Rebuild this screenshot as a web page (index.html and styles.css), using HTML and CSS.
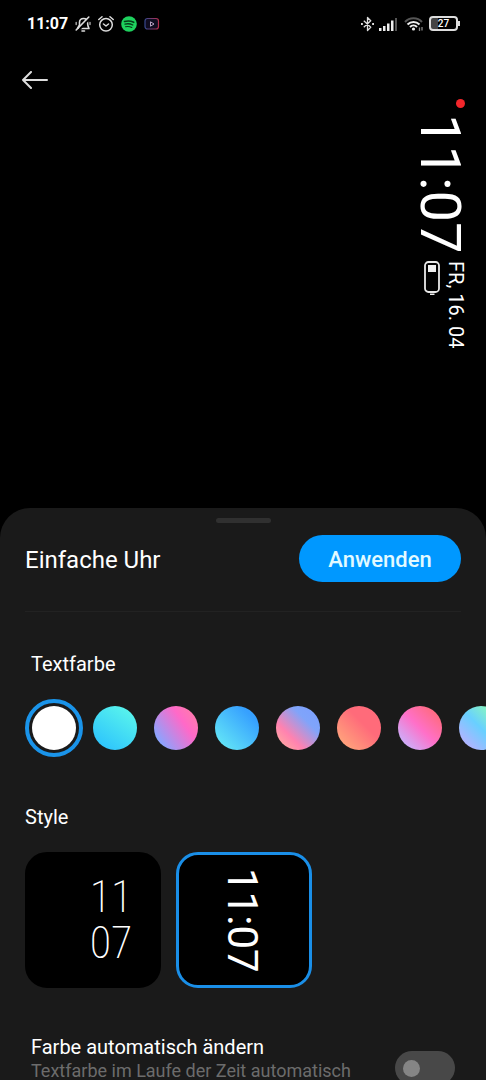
FILE: index.html
```html
<!DOCTYPE html>
<html lang="de">
<head>
<meta charset="utf-8">
<meta name="viewport" content="width=device-width, initial-scale=1">
<title>Einfache Uhr</title>
<link rel="stylesheet" href="styles.css">
</head>
<body>
<div class="screen">
  <header class="status">
    <div class="status-group">
      <time class="status-time">11:07</time>
      <svg class="icon" viewBox="0 0 16 16" fill="none" stroke="#ddd" stroke-width="1.6" stroke-linecap="round" stroke-linejoin="round">
        <path d="M4.500 9V6.500C4.500 4 6 2.500 8.500 2.500S12.500 4 12.500 6.500C12.500 9 13 10.500 14 12.500H2.500L4.500 9M7 15h2.500"/>
        <path d="M15 6.500v2M1.200 6.500v2" stroke="#999"/>
        <path d="M14.500 2.500 2.500 15.500" stroke="#000" stroke-width="2"/>
        <path d="M13.800 1 1.200 14"/>
      </svg>
      <svg class="icon" viewBox="0 0 16 16" fill="none" stroke="#ddd" stroke-width="1.500" stroke-linecap="round" stroke-linejoin="round">
        <circle cx="8" cy="8.800" r="6.300"/><path d="m5.500 8 2.500 2 2.500-2M.8 3.500 4 .8M15.200 3.500 12 .8"/>
      </svg>
      <svg class="icon" viewBox="0 0 16 16" fill="none" stroke="#063d18" stroke-linecap="round">
        <circle cx="8" cy="8" r="7.800" fill="#1ed15e" stroke="none"/>
        <path d="M3.500 5.500c3-.9 6.500-.6 9.200.8" stroke-width="1.600"/><path d="M4 8.200c2.700-.8 5.500-.4 7.800.8" stroke-width="1.300"/><path d="M4.500 10.700c2.200-.5 4.400-.3 6.300.8" stroke-width="1.100"/>
      </svg>
      <svg class="icon" viewBox="0 0 16 16" fill="none" stroke-width="1.200">
        <defs><linearGradient id="tube"><stop stop-color="#35488f"/><stop offset="1" stop-color="#b52c4c"/></linearGradient></defs>
        <rect x="1" y="2.500" width="13.500" height="10.500" rx="2.500" fill="#100c20" stroke="url(#tube)"/>
        <path d="M6.500 5.800v4.400L10 8z" stroke="#b9a3c4" stroke-width="1"/>
      </svg>
    </div>
    <div class="status-group status-group-end">
      <svg class="bluetooth" viewBox="0 0 14 16" fill="none" stroke="#ddd" stroke-width="1.400" stroke-linejoin="round">
        <path d="m3 4.500 7.500 7L7 15V1l3.500 3.500-7.500 7"/><path d="M0 8h2M12 8h2" stroke-width="2"/>
      </svg>
      <svg class="signal" viewBox="0 0 18 14">
        <path fill="#eee" d="M0 11h2.500v3H0zM4 9h2.500v5H4zM8 6.500h2.500V14H8zM12 3.500h2.500V14H12z"/><path fill="#555" d="M16 1h2v13h-2z"/>
      </svg>
      <svg class="wifi" viewBox="0 0 20 16" fill="none" stroke-width="2">
        <path stroke="#555" d="M1 6c4.500-5 12.500-5 17 0"/><path stroke="#eee" d="M3.500 8.500c3.500-3.500 8.500-3.500 12 0M6 11c2-2 5-2 7 0"/>
        <circle cx="9.500" cy="13" r="1.600" fill="#eee"/><path stroke="#888" d="M15.500 11.500v3.500M18 11v3.500" stroke-width="1.300"/>
      </svg>
      <span class="battery">27</span>
    </div>
  </header>

  <main class="content">
    <section class="preview">
      <button class="back" type="button" aria-label="Zurück">
        <svg viewBox="0 0 26 18" fill="none" stroke="#ddd" stroke-width="2" stroke-linecap="round" stroke-linejoin="round"><path d="M25 9H1M9 1 1 9l8 8"/></svg>
      </button>
      <div class="aod">
        <span class="dot"></span>
        <time class="aod-time">11:07</time>
        <div class="aod-info">
          <span class="aod-date">FR, 16. 04</span>
          <svg class="aod-battery" viewBox="0 0 16 36"><rect x="1" y="1" width="14" height="30" rx="3.500" fill="none" stroke="#e8e8e8" stroke-width="1.800"/><path fill="#eee" d="M4 4h8v7H4zM6 32.500h4.500V34H6z"/></svg>
        </div>
      </div>
    </section>

    <section class="sheet">
      <div class="handle"></div>
      <div class="sheet-head">
        <h1 class="title">Einfache Uhr</h1>
        <button class="apply" type="button">Anwenden</button>
      </div>

      <h2 class="label label-inset" id="colour-label">Textfarbe</h2>
      <div class="swatches" role="radiogroup" aria-labelledby="colour-label">
        <input class="swatch white" type="radio" name="colour" aria-label="Weiß" checked>
        <input class="swatch aqua" type="radio" name="colour" aria-label="Türkis">
        <input class="swatch orchid" type="radio" name="colour" aria-label="Orchidee">
        <input class="swatch sky" type="radio" name="colour" aria-label="Himmelblau">
        <input class="swatch dusk" type="radio" name="colour" aria-label="Dämmerung">
        <input class="swatch coral" type="radio" name="colour" aria-label="Koralle">
        <input class="swatch pink" type="radio" name="colour" aria-label="Rosa">
        <input class="swatch mint" type="radio" name="colour" aria-label="Minze">
      </div>

      <h2 class="label label-style" id="style-label">Style</h2>
      <div class="styles" role="radiogroup" aria-labelledby="style-label">
        <label class="card card-stacked"><input class="card-input" type="radio" name="style"><span>11</span><span>07</span></label>
        <label class="card card-vertical"><input class="card-input" type="radio" name="style" checked><span class="card-time">11:07</span></label>
      </div>

      <div class="setting">
        <label class="setting-text" for="auto-colour">
          <span class="setting-name">Farbe automatisch ändern</span>
          <span class="setting-hint">Textfarbe im Laufe der Zeit automatisch</span>
        </label>
        <input class="switch" type="checkbox" id="auto-colour">
      </div>
    </section>
  </main>
</div>
</body>
</html>
```

FILE: styles.css
```css
* { box-sizing: border-box; }

body {
  margin: 0;
  background: #000;
  color: #fff;
  font-family: Roboto, "Liberation Sans", sans-serif;
}

.screen {
  display: flex;
  flex-direction: column;
  height: 100vh;
  overflow: hidden;
}

.status {
  display: flex;
  flex: none;
  justify-content: space-between;
  align-items: center;
  height: 47px;
  padding: 0 27px;
}

.status-group { display: flex; align-items: center; gap: 7px; }
.status-group-end { gap: 5px; }
.status-time { font-size: 16px; font-weight: 700; line-height: 20px; }
.icon { width: 16px; height: 16px; }
.bluetooth { width: 13px; height: 16px; }
.signal { width: 18px; height: 14px; }
.wifi { width: 20px; height: 16px; margin-left: 2px; }

.battery {
  position: relative;
  display: flex;
  justify-content: center;
  align-items: center;
  width: 29px;
  height: 15px;
  margin-right: 1px;
  border: 2px solid #ddd;
  border-radius: 4px;
  background: linear-gradient(90deg, #444 27%, #000 27%);
  font-size: 10px;
  font-weight: 500;
  line-height: 11px;
}

.battery::after {
  content: "";
  position: absolute;
  top: 3px;
  right: -4px;
  width: 2px;
  height: 5px;
  background: #ddd;
}

.content { flex: 1; min-height: 0; }

.preview {
  display: flex;
  justify-content: space-between;
  align-items: flex-start;
  height: 461px;
  padding: 17px 20px 0 16px;
}

.back {
  display: flex;
  justify-content: center;
  align-items: center;
  width: 38px;
  height: 32px;
  padding: 0;
  border: 0;
  background: none;
}

.back svg { width: 26px; height: 18px; }

.aod {
  display: flex;
  flex-direction: column;
  align-items: flex-end;
  padding-top: 35px;
}

.dot {
  width: 9px;
  height: 9px;
  margin-right: 1px;
  border-radius: 50%;
  background: #f3262b;
}

.aod-time {
  margin-top: 6px;
  font-size: 56px;
  line-height: 52px;
  writing-mode: vertical-rl;
}

.aod-info {
  display: flex;
  flex-direction: row-reverse;
  align-items: flex-start;
  gap: 6px;
  margin-top: 8px;
}

.aod-date { font-size: 20px; line-height: 20px; writing-mode: vertical-rl; }
.aod-battery { width: 16px; height: 36px; }

.sheet {
  padding: 10px 25px 0;
  border-radius: 30px 30px 0 0;
  background: #1a1a1a;
}

.handle {
  width: 55px;
  height: 5px;
  margin: 0 auto;
  border-radius: 3px;
  background: #303030;
}

.sheet-head {
  display: flex;
  justify-content: space-between;
  align-items: center;
  padding: 12px 0 29px;
  border-bottom: 1px solid #222;
}

.title { margin: 0; padding-top: 2px; font-size: 24px; font-weight: 400; line-height: 32px; }

.apply {
  width: 162px;
  height: 47px;
  padding: 2px 0 0;
  border: 0;
  border-radius: 24px;
  background: #0098ff;
  color: #e2faff;
  font-family: inherit;
  font-size: 22px;
  font-weight: 500;
}

.label { margin: 0; font-size: 20px; font-weight: 400; line-height: 24px; }
.label-inset { margin-top: 40px; padding-left: 6px; }
.label-style { margin-top: 47px; }

.swatches {
  display: flex;
  gap: 17px;
  margin: 22px -25px 0 0;
  padding: 8px 0 8px 7px;
  overflow: hidden;
}

.swatch {
  flex: none;
  width: 44px;
  height: 44px;
  margin: 0;
  border-radius: 50%;
  appearance: none;
}

.swatch:checked { outline: 4px solid #1a94ea; outline-offset: 3px; }

.white { background: #fff; }
.aqua { background: linear-gradient(35deg, #27bdff, #5ffbea); }
.orchid { background: linear-gradient(55deg, #8aa4ff 15%, #ff69c8 65%, #ff82a0); }
.sky { background: linear-gradient(45deg, #6af0f5, #36a0ff 80%); }
.dusk { background: linear-gradient(45deg, #ffa9a0 8%, #ff82b0 32%, #80a4fa 68%, #7a9fff); }
.coral { background: linear-gradient(45deg, #ffb27c, #ff6b7a 60%); }
.pink { background: linear-gradient(45deg, #c8b4ff 10%, #ff70c8 50%, #ff6a78 90%); }
.mint { background: linear-gradient(45deg, #b0b4ff 15%, #68d0ff 50%, #90ffb0 90%); }

.styles { display: flex; gap: 15px; margin-top: 23px; }

.card {
  display: flex;
  width: 136px;
  height: 136px;
  border: 3px solid #000;
  border-radius: 22px;
  background: #000;
}

.card:has(:checked) { border-color: #1a8fe8; }
.card-input { position: absolute; opacity: 0; pointer-events: none; }

.card-stacked {
  flex-direction: column;
  justify-content: center;
  align-items: center;
  padding-left: 36px;
  font-family: "Roboto Condensed", Roboto, sans-serif;
  font-size: 44px;
  font-weight: 200;
  line-height: 46px;
}

.card-vertical { justify-content: center; align-items: center; padding-right: 4px; }
.card-time { font-size: 42px; line-height: 44px; writing-mode: vertical-rl; }

.setting {
  display: flex;
  justify-content: space-between;
  align-items: flex-start;
  margin-top: 45px;
  padding: 0 6px 24px;
}

.setting-text { display: flex; flex-direction: column; }
.setting-name { font-size: 20px; line-height: 28px; }
.setting-hint { color: #6c6c6c; font-size: 18px; line-height: 20px; }

.switch {
  display: flex;
  flex: none;
  align-items: center;
  width: 60px;
  height: 34px;
  margin: 18px 0 0;
  padding: 0 8px;
  border-radius: 17px;
  background: #484848;
  appearance: none;
}

.switch::before {
  content: "";
  width: 17px;
  height: 17px;
  border-radius: 50%;
  background: #858585;
}
```
